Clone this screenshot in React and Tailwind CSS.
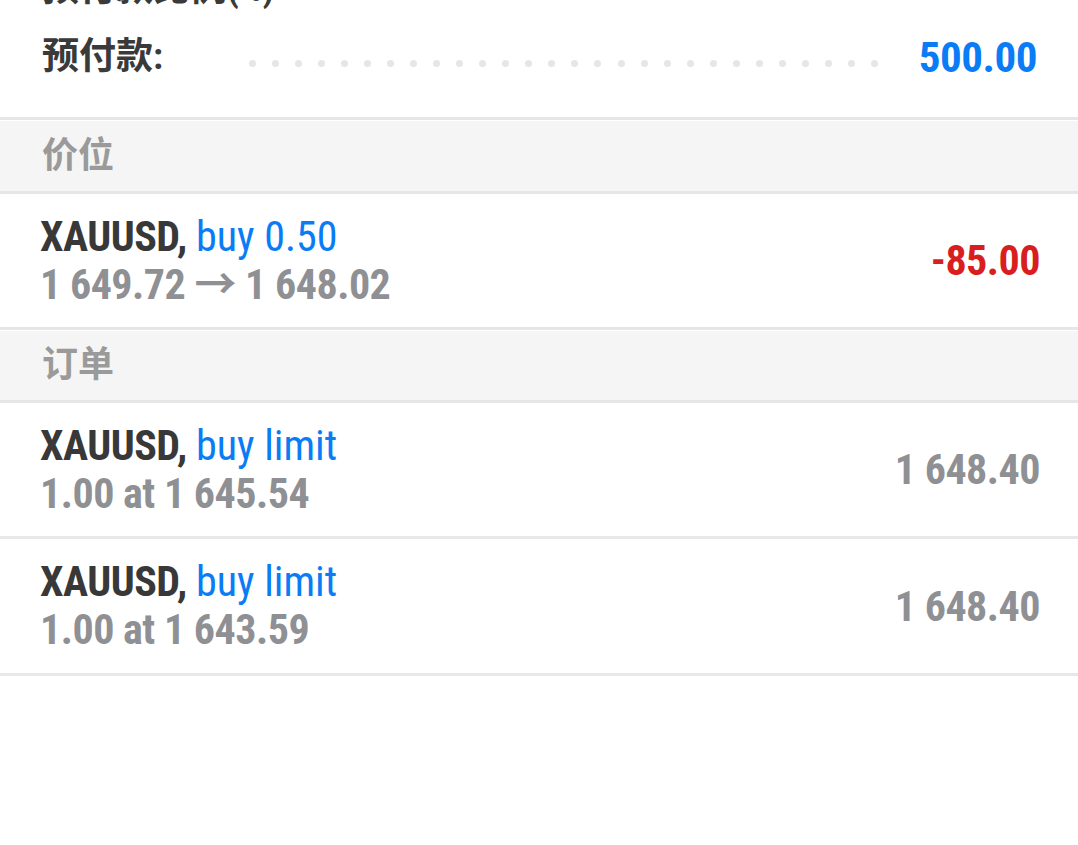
import React from "react";

const cn = '"Roboto Condensed", Roboto, "Noto Sans CJK SC", sans-serif';

const dots = Array.from({ length: 28 });

const InfoRow = ({ label, value }) => (
  <div className="flex h-[68px] items-center pl-[42px] pr-[41px]">
    <div className="w-[207px] shrink-0 text-[37px] font-bold text-[#3a3a3a]">{label}</div>
    <div className="mt-[12px] flex w-[629px] shrink-0 justify-between">
      {dots.map((_, i) => (
        <span key={i} className="block h-[7px] w-[7px] rounded-full bg-[#e6e6e6]" />
      ))}
    </div>
    <div className="flex-1 text-right text-[43px] font-bold tracking-[-0.5px] text-[#0a7cf5]">{value}</div>
  </div>
);

const SectionHeader = ({ title, h }) => (
  <div className={`flex ${h} items-center border-y-[3px] border-[#e6e6e6] bg-[#f5f5f5] pl-[42px] shadow-[inset_0_1px_0_#ffffff]`}>
    <span className="text-[36px] font-semibold text-[#9a9a9a]">{title}</span>
  </div>
);

const TradeRow = ({ action, detail, value, valueClass, h = "h-[133px]" }) => (
  <div className={`flex ${h} items-center justify-between pl-[40px] pr-[38px]`}>
    <div className="text-[42px] leading-[48px]">
      <div>
        <span className="font-bold tracking-[-0.5px] text-[#383838]">XAUUSD, </span>
        <span className="text-[#0a7cf5]">{action}</span>
      </div>
      <div className="font-bold tracking-[-0.5px] text-[#8f9094]">{detail}</div>
    </div>
    <div className={`text-[42px] font-bold tracking-[-0.5px] ${valueClass}`}>{value}</div>
  </div>
);

export default function App() {
  return (
    <div className="h-[845px] w-full overflow-hidden bg-white" style={{ fontFamily: cn }}>
      <div className="-mt-[45px] pb-[26px]">
        <div className="flex h-[68px] items-center pl-[42px] text-[37px] font-bold text-[#3a3a3a]">
          预付款比例(%)
        </div>
        <InfoRow label="预付款:" value="500.00" />
      </div>

      <SectionHeader title="价位" h="h-[77px]" />
      <TradeRow
        action="buy 0.50"
        detail="1 649.72 → 1 648.02"
        value="-85.00"
        valueClass="text-[#d81e1e]"
      />

      <SectionHeader title="订单" h="h-[76px]" />
      <TradeRow
        action="buy limit"
        detail="1.00 at 1 645.54"
        value="1 648.40"
        valueClass="text-[#8f9094]"
      />
      <div className="h-[3px] bg-[#e8e8e8]" />
      <TradeRow
        action="buy limit"
        detail="1.00 at 1 643.59"
        value="1 648.40"
        valueClass="text-[#8f9094]"
        h="h-[134px]"
      />
      <div className="h-[3px] bg-[#e8e8e8]" />
    </div>
  );
}
